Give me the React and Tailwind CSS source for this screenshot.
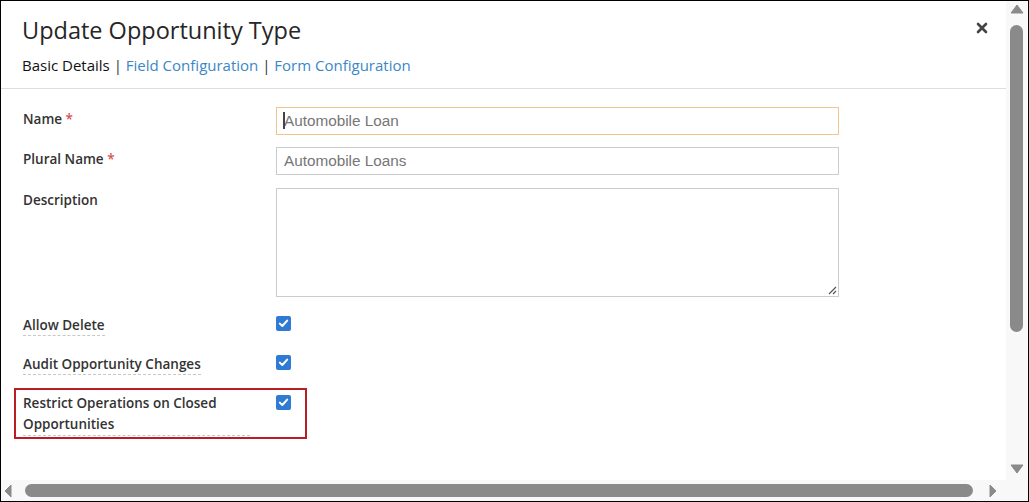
import React from "react";

const Check = () => (
  <div className="w-[15px] h-[15px] rounded-[2px] bg-[#2f7bd3] flex items-center justify-center">
    <svg width="11" height="11" viewBox="0 0 11 11">
      <path d="M1.8 5.6 L4.3 8 L9.2 2.6" fill="none" stroke="#fff" strokeWidth="2" strokeLinecap="round" strokeLinejoin="round" />
    </svg>
  </div>
);

const Label = ({ children, wide }) => (
  <span
    className={
      "block border-b border-dashed border-[#c8c8c8] text-[13.5px] font-semibold text-[#333] " +
      (wide ? "max-w-[227px] leading-[21px]" : "leading-[18px] pb-[1px]")
    }
  >
    {children}
  </span>
);

const Input = ({ value, focused }) => (
  <div
    className={
      "relative w-[563px] h-[28px] border bg-white flex items-center pl-[7px] text-[15.3px] text-[#767676] " +
      (focused ? "border-[#f2c48f]" : "border-[#cccccc]")
    }
    style={{ fontFamily: "'Liberation Sans', Arial, sans-serif" }}
  >
    {focused && <span className="absolute left-[6px] top-[4px] w-[2px] h-[17px] bg-[#444]" />}
    {value}
  </div>
);

export default function App() {
  return (
    <div
      className="w-[1029px] h-[502px] border border-black bg-white flex flex-col overflow-hidden"
      style={{ fontFamily: "'Open Sans', 'Noto Sans', sans-serif" }}
    >
      <div className="flex flex-1 min-h-0">
        {/* main dialog content */}
        <div className="w-[1005px] flex flex-col">
          <div className="flex items-start justify-between pl-[21px] pr-[18px] pt-[13px]">
            <h2 className="text-[23.5px] leading-[32px] text-[#262626] font-medium">Update Opportunity Type</h2>
            <svg width="12" height="12" viewBox="0 0 12 12" className="mt-[8px]">
              <path d="M2 2 L10 10 M10 2 L2 10" stroke="#444" strokeWidth="2.6" strokeLinecap="round" />
            </svg>
          </div>
          <div className="pl-[21px] mt-[9px] text-[15px] leading-[20px]">
            <span className="text-[#111]">Basic Details</span>
            <span className="text-[#333]"> | </span>
            <span className="text-[#3b87c5]">Field Configuration</span>
            <span className="text-[#333]"> | </span>
            <span className="text-[#3b87c5]">Form Configuration</span>
          </div>
          <div className="mt-[13px] h-[1px] bg-[#dedede]" />

          <div className="pt-[18px] pl-[22px] flex flex-col">
            <div className="flex items-start">
              <div className="w-[253px] pt-[3px] text-[13.5px] leading-[18px] font-semibold text-[#333]">
                Name <span className="text-[#d9534f]">*</span>
              </div>
              <Input value="Automobile Loan" focused />
            </div>
            <div className="flex items-start mt-[12px]">
              <div className="w-[253px] pt-[3px] text-[13.5px] leading-[18px] font-semibold text-[#333]">
                Plural Name <span className="text-[#d9534f]">*</span>
              </div>
              <Input value="Automobile Loans" />
            </div>
            <div className="flex items-start mt-[13px]">
              <div className="w-[253px] pt-[3px] text-[13.5px] leading-[18px] font-semibold text-[#333]">
                Description
              </div>
              <div className="relative w-[563px] h-[109px] border border-[#cccccc]">
                <svg width="9" height="9" viewBox="0 0 9 9" className="absolute right-[1px] bottom-[1px]">
                  <path d="M8 1 L1 8 M8 5 L5 8" stroke="#555" strokeWidth="1.2" />
                </svg>
              </div>
            </div>

            <div className="flex items-start mt-[19px]">
              <div className="w-[253px] flex items-start">
                <Label>Allow Delete</Label>
              </div>
              <Check />
            </div>
            <div className="flex items-start mt-[19px]">
              <div className="w-[253px] flex items-start">
                <Label>Audit Opportunity Changes</Label>
              </div>
              <Check />
            </div>
            <div className="mt-[13px] ml-[-9px] w-[293px] h-[51px] border-2 border-[#b81f24] pl-[7px] pt-[3px] flex items-start">
              <div className="w-[253px] flex items-start">
                <Label wide>Restrict Operations on Closed Opportunities</Label>
              </div>
              <div className="pt-[2px]">
                <Check />
              </div>
            </div>
          </div>
        </div>

        {/* vertical scrollbar */}
        <div className="w-[21px] bg-[#f8f8f8] flex flex-col items-center pt-[3px] pb-[6px]">
          <svg width="14" height="10" viewBox="0 0 14 10">
            <path d="M7 1 L13 9 L1 9 Z" fill="#8a8a8a" stroke="#8a8a8a" strokeLinejoin="round" />
          </svg>
          <div className="mt-[11px] w-[13px] h-[307px] rounded-full bg-[#8a8a8a]" />
          <div className="flex-1" />
          <svg width="14" height="10" viewBox="0 0 14 10">
            <path d="M1 1 L13 1 L7 9 Z" fill="#8a8a8a" stroke="#8a8a8a" strokeLinejoin="round" />
          </svg>
        </div>
      </div>

      {/* horizontal scrollbar */}
      <div className="h-[21px] bg-[#f8f8f8] flex items-center pl-[3px]">
        <svg width="8" height="14" viewBox="0 0 8 14">
          <path d="M1 7 L7 1 L7 13 Z" fill="#8a8a8a" stroke="#8a8a8a" strokeLinejoin="round" />
        </svg>
        <div className="ml-[13px] w-[948px] h-[13px] rounded-full bg-[#8a8a8a]" />
        <div className="ml-[16px]">
          <svg width="8" height="14" viewBox="0 0 8 14">
            <path d="M1 1 L7 7 L1 13 Z" fill="#8a8a8a" stroke="#8a8a8a" strokeLinejoin="round" />
          </svg>
        </div>
      </div>
    </div>
  );
}
